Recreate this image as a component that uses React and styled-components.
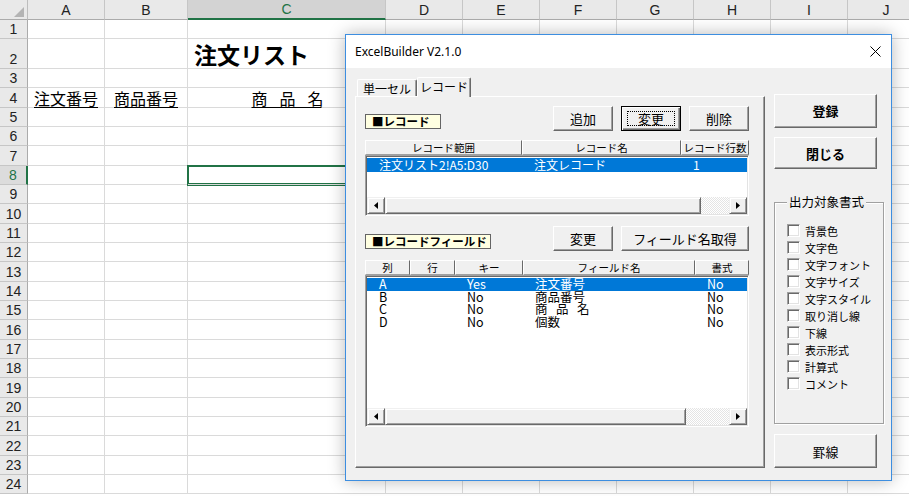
import React from "react";
import styled, { createGlobalStyle, css } from "styled-components";

const GlobalStyle = createGlobalStyle`
  html, body {
    margin: 0;
    padding: 0;
    background: #fff;
    overflow: hidden;
  }
  body {
    font-family: "Noto Sans CJK JP", "Liberation Sans", sans-serif;
    color: #000;
  }
`;

const COLS = ["A", "B", "C", "D", "E", "F", "G", "H", "I", "J"];
const ROWS = Array.from({ length: 24 }, (_, i) => i + 1);

/* ---------- spreadsheet ---------- */

const Sheet = styled.div`
  display: grid;
  grid-template-columns: 28px 77px 83px 198px repeat(7, 77px);
  grid-template-rows: 20px 19px 30px repeat(22, 19.33px);
  width: 925px;
  font-family: "Liberation Sans", "Noto Sans CJK JP", sans-serif;
`;

const Corner = styled.div`
  box-sizing: border-box;
  background: #e9e9e9;
  border-right: 1px solid #bdbdbd;
  border-bottom: 1px solid #ababab;
  display: flex;
  align-items: flex-end;
  justify-content: flex-end;
  padding: 0 3px 2px 0;
`;

const ColHead = styled.div`
  box-sizing: border-box;
  background: #e9e9e9;
  border-right: 1px solid #c6c6c6;
  border-bottom: 1px solid #ababab;
  display: flex;
  align-items: center;
  justify-content: center;
  font-size: 14px;
  color: #222;
  ${(p) =>
    p.$selected &&
    css`
      background: #d3d3d3;
      color: #217346;
      border-bottom: 2px solid #217346;
    `}
`;

const RowHead = styled.div`
  box-sizing: border-box;
  background: #e9e9e9;
  border-right: 1px solid #ababab;
  border-bottom: 1px solid #c6c6c6;
  display: flex;
  align-items: flex-end;
  justify-content: center;
  font-size: 14px;
  line-height: 17px;
  color: #222;
  ${(p) =>
    p.$selected &&
    css`
      background: #dcdcdc;
      color: #217346;
      border-right: 2px solid #217346;
    `}
`;

const Cell = styled.div`
  box-sizing: border-box;
  border-right: 1px solid #dadada;
  border-bottom: 1px solid #dadada;
  display: flex;
  align-items: flex-end;
  justify-content: ${(p) => p.$align || "flex-start"};
  white-space: nowrap;
  font-family: "Noto Sans CJK JP", sans-serif;
  ${(p) =>
    p.$active &&
    css`
      position: relative;
      z-index: 1;
      box-shadow: 0 0 0 1px #217346, inset 0 0 0 1px #217346;
    `}
`;

const SheetTitle = styled.span`
  font-size: 23px;
  font-weight: 700;
  line-height: 28px;
  padding-left: 6px;
`;

const ColumnLabel = styled.span`
  font-size: 16px;
  line-height: 18px;
  text-decoration: underline;
  text-underline-offset: 2px;
  letter-spacing: ${(p) => (p.$tight ? "-2px" : "0")};
`;

const sheetContent = {
  C2: <SheetTitle>注文リスト</SheetTitle>,
  A4: <ColumnLabel>注文番号</ColumnLabel>,
  B4: <ColumnLabel>商品番号</ColumnLabel>,
  C4: <ColumnLabel $tight>商　品　名</ColumnLabel>,
};

/* ---------- dialog ---------- */

const Dialog = styled.div`
  position: absolute;
  z-index: 10;
  left: 345px;
  top: 34px;
  width: 547px;
  height: 447px;
  box-sizing: border-box;
  border: 1px solid #3d8ee0;
  background: #f0f0f0;
  box-shadow: 0 0 16px rgba(0, 0, 0, 0.28);
  display: flex;
  flex-direction: column;
`;

const TitleBar = styled.div`
  height: 33px;
  flex: 0 0 33px;
  background: #fff;
  display: flex;
  align-items: center;
  justify-content: space-between;
  padding: 0 10px 0 9px;
  font-family: "Noto Sans", sans-serif;
  font-size: 12px;
`;

const DialogBody = styled.div`
  flex: 1;
  display: flex;
  gap: 9px;
  padding: 9px 7px 12px 9px;
  min-height: 0;
`;

const TabArea = styled.div`
  width: 410px;
  display: flex;
  flex-direction: column;
`;

const TabStrip = styled.div`
  height: 19px;
  display: flex;
  align-items: flex-end;
  padding-left: 2px;
`;

const Tab = styled.div`
  box-sizing: border-box;
  width: ${(p) => p.$w}px;
  height: ${(p) => (p.$active ? 20 : 17)}px;
  margin-bottom: ${(p) => (p.$active ? -1 : 0)}px;
  position: relative;
  z-index: ${(p) => (p.$active ? 2 : 0)};
  background: #f0f0f0;
  border-top: 1px solid #fff;
  border-left: 1px solid #fff;
  border-right: 1px solid #696969;
  border-radius: 2px 2px 0 0;
  box-shadow: inset -1px 0 #a0a0a0;
  display: flex;
  align-items: ${(p) => (p.$active ? "flex-start" : "center")};
  padding-top: ${(p) => (p.$active ? 1 : 0)}px;
  justify-content: center;
  font-size: 12px;
  line-height: 15px;
`;

const TabPanel = styled.div`
  flex: 1;
  box-sizing: border-box;
  border-top: 1px solid #fff;
  border-left: 1px solid #fff;
  border-right: 1px solid #696969;
  border-bottom: 1px solid #696969;
  box-shadow: inset -1px -1px #a0a0a0;
  padding: 9px 15px 0 9px;
  display: flex;
  flex-direction: column;
`;

const SectionBar = styled.div`
  height: 25px;
  display: flex;
  align-items: flex-end;
  justify-content: space-between;
  margin-top: ${(p) => p.$gap || 0}px;
`;

const TagLabel = styled.div`
  box-sizing: border-box;
  width: ${(p) => p.$w}px;
  height: 15px;
  margin-bottom: 2px;
  background: #ffffe1;
  border: 1px solid #646464;
  padding-left: 6px;
  font-size: 11.5px;
  font-weight: 700;
  line-height: 13px;
  white-space: nowrap;
`;

const ButtonRow = styled.div`
  display: flex;
  gap: 8px;
  align-self: stretch;
`;

const Button = styled.button`
  box-sizing: border-box;
  width: ${(p) => p.$w}px;
  height: ${(p) => p.$h}px;
  padding: 0;
  margin: 0;
  background: #f0f0f0;
  font-family: "Noto Sans CJK JP", sans-serif;
  font-size: 13px;
  font-weight: ${(p) => (p.$bold ? 700 : 400)};
  color: #000;
  border-style: solid;
  border-width: 1px;
  border-color: #fff #696969 #696969 #fff;
  box-shadow: inset -1px -1px #a0a0a0;
  display: flex;
  align-items: center;
  justify-content: center;
  ${(p) =>
    p.$focused &&
    css`
      border-color: #000;
      box-shadow: inset 1px 1px #fff, inset -1px -1px #696969,
        inset -2px -2px #a0a0a0;
    `}
`;

const FocusRing = styled.span`
  box-sizing: border-box;
  width: calc(100% - 10px);
  height: calc(100% - 8px);
  border: 1px dotted #000;
  display: flex;
  align-items: center;
  justify-content: center;
`;

const ListHeader = styled.div`
  display: grid;
  grid-template-columns: ${(p) => p.$cols};
  height: 15px;
  margin-top: 9px;
`;

const HeaderCell = styled.div`
  box-sizing: border-box;
  background: #f0f0f0;
  border-style: solid;
  border-width: 1px;
  border-color: #fff #696969 #a0a0a0 #fff;
  font-size: 10.5px;
  line-height: 13px;
  text-align: center;
  white-space: nowrap;
  overflow: hidden;
`;

const ListBox = styled.div`
  box-sizing: border-box;
  height: ${(p) => p.$h}px;
  background: #fff;
  border-style: solid;
  border-width: 1px;
  border-color: #a0a0a0 #fff #fff #a0a0a0;
  box-shadow: inset 1px 1px #696969, inset -1px -1px #e3e3e3;
  padding: 1px;
  display: flex;
  flex-direction: column;
`;

const Rows = styled.div`
  flex: 1;
  padding-top: 1px;
`;

const ListRow = styled.div`
  display: grid;
  grid-template-columns: ${(p) => p.$cols};
  height: ${(p) => p.$h}px;
  line-height: ${(p) => p.$h}px;
  font-size: ${(p) => p.$size}px;
  white-space: nowrap;
  background: ${(p) => (p.$selected ? "#0078d7" : "transparent")};
  color: ${(p) => (p.$selected ? "#fff" : "#000")};
`;

const RowCell = styled.span`
  padding-left: 12px;
  overflow: visible;
  letter-spacing: ${(p) => (p.$tight ? "-2px" : "0")};
`;

const ScrollBar = styled.div`
  height: 17px;
  display: flex;
  flex: 0 0 17px;
`;

const raised = css`
  box-sizing: border-box;
  background: #f0f0f0;
  border-style: solid;
  border-width: 1px;
  border-color: #f0f0f0 #696969 #696969 #f0f0f0;
  box-shadow: inset 1px 1px #fff, inset -1px -1px #a0a0a0;
`;

const ArrowButton = styled.div`
  ${raised}
  width: 18px;
  display: flex;
  align-items: center;
  justify-content: center;
`;

const Thumb = styled.div`
  ${raised}
  flex: 0 0 ${(p) => p.$w}px;
`;

const Track = styled.div`
  flex: 1;
  background: repeating-conic-gradient(#fff 0 25%, #e4e4e4 0 50%) 0 0 / 2px
    2px;
`;

const SideColumn = styled.div`
  width: 110px;
  display: flex;
  flex-direction: column;
  padding-top: 17px;
`;

const GroupBox = styled.fieldset`
  box-sizing: border-box;
  margin: 26px 0 0 0;
  height: 231px;
  padding: 13px 0 0 12px;
  border: 1px solid #a0a0a0;
  box-shadow: inset 1px 1px #fff, 1px 1px #fff;
`;

const Legend = styled.legend`
  font-size: 12.5px;
  line-height: 14px;
  padding: 0 2px;
  background: #f0f0f0;
  position: relative;
  z-index: 1;
`;

const CheckRow = styled.label`
  height: 17px;
  display: flex;
  align-items: center;
  gap: 5px;
  font-size: 11px;
  white-space: nowrap;
`;

const CheckBox = styled.span`
  box-sizing: border-box;
  width: 13px;
  height: 13px;
  background: #fff;
  border-style: solid;
  border-width: 1px;
  border-color: #a0a0a0 #fff #fff #a0a0a0;
  box-shadow: inset 1px 1px #696969, inset -1px -1px #e3e3e3;
`;

/* ---------- data ---------- */

const RECORD_COLS = "157px 159px 68px";
const RECORD_ROW_COLS = "155px 159px 66px";
const FIELD_COLS = "45px 45px 68px 172px 54px";
const FIELD_ROW_COLS = "43px 45px 68px 172px 52px";

const fields = [
  ["A", "", "Yes", "注文番号", "No"],
  ["B", "", "No", "商品番号", "No"],
  ["C", "", "No", "商　品　名", "No"],
  ["D", "", "No", "個数", "No"],
];

const formats = [
  "背景色",
  "文字色",
  "文字フォント",
  "文字サイズ",
  "文字スタイル",
  "取り消し線",
  "下線",
  "表示形式",
  "計算式",
  "コメント",
];

function Arrow({ dir }) {
  return (
    <svg width="4" height="7" viewBox="0 0 4 7">
      <polygon
        points={dir === "left" ? "4,0 4,7 0,3.5" : "0,0 0,7 4,3.5"}
        fill="#000"
      />
    </svg>
  );
}

function HScroll({ thumb }) {
  return (
    <ScrollBar>
      <ArrowButton>
        <Arrow dir="left" />
      </ArrowButton>
      <Thumb $w={thumb} />
      <Track />
      <ArrowButton>
        <Arrow dir="right" />
      </ArrowButton>
    </ScrollBar>
  );
}

function Spreadsheet() {
  return (
    <Sheet>
      <Corner>
        <svg width="10" height="10" viewBox="0 0 10 10">
          <polygon points="0,10 10,10 10,0" fill="#b4b4b4" />
        </svg>
      </Corner>
      {COLS.map((c) => (
        <ColHead key={c} $selected={c === "C"}>
          {c}
        </ColHead>
      ))}
      {ROWS.map((r) => (
        <React.Fragment key={r}>
          <RowHead $selected={r === 8}>{r}</RowHead>
          {COLS.map((c) => (
            <Cell
              key={c}
              $active={r === 8 && c === "C"}
              $align={r === 4 ? "center" : "flex-start"}
            >
              {sheetContent[`${c}${r}`]}
            </Cell>
          ))}
        </React.Fragment>
      ))}
    </Sheet>
  );
}

function BuilderDialog() {
  return (
    <Dialog>
      <TitleBar>
        <span>ExcelBuilder V2.1.0</span>
        <svg width="11" height="11" viewBox="0 0 11 11">
          <path d="M0.5 0.5 L10.5 10.5 M10.5 0.5 L0.5 10.5" stroke="#000" strokeWidth="1" />
        </svg>
      </TitleBar>
      <DialogBody>
        <TabArea>
          <TabStrip>
            <Tab $w={60}>単一セル</Tab>
            <Tab $w={54} $active>
              レコード
            </Tab>
          </TabStrip>
          <TabPanel>
            <SectionBar>
              <TagLabel $w={76}>■レコード</TagLabel>
              <ButtonRow>
                <Button $w={60} $h={25}>追加</Button>
                <Button $w={60} $h={25} $focused>
                  <FocusRing>変更</FocusRing>
                </Button>
                <Button $w={60} $h={25}>削除</Button>
              </ButtonRow>
            </SectionBar>
            <ListHeader $cols={RECORD_COLS}>
              <HeaderCell>レコード範囲</HeaderCell>
              <HeaderCell>レコード名</HeaderCell>
              <HeaderCell>レコード行数</HeaderCell>
            </ListHeader>
            <ListBox $h={61}>
              <Rows>
                <ListRow $cols={RECORD_ROW_COLS} $h={14} $size={12} $selected>
                  <RowCell>注文リスト2!A5:D30</RowCell>
                  <RowCell>注文レコード</RowCell>
                  <RowCell>1</RowCell>
                </ListRow>
              </Rows>
              <HScroll thumb={316} />
            </ListBox>

            <SectionBar $gap={10}>
              <TagLabel $w={126}>■レコードフィールド</TagLabel>
              <ButtonRow>
                <Button $w={60} $h={25}>変更</Button>
                <Button $w={128} $h={25}>フィールド名取得</Button>
              </ButtonRow>
            </SectionBar>
            <ListHeader $cols={FIELD_COLS}>
              <HeaderCell>列</HeaderCell>
              <HeaderCell>行</HeaderCell>
              <HeaderCell>キー</HeaderCell>
              <HeaderCell>フィールド名</HeaderCell>
              <HeaderCell>書式</HeaderCell>
            </ListHeader>
            <ListBox $h={152}>
              <Rows>
                {fields.map((f, i) => (
                  <ListRow
                    key={f[0]}
                    $cols={FIELD_ROW_COLS}
                    $h={12.5}
                    $size={12.5}
                    $selected={i === 0}
                  >
                    {f.map((v, j) => (
                      <RowCell key={j} $tight={v.includes("　")}>
                        {v}
                      </RowCell>
                    ))}
                  </ListRow>
                ))}
              </Rows>
              <HScroll thumb={301} />
            </ListBox>
          </TabPanel>
        </TabArea>

        <SideColumn>
          <Button $w={103} $h={34} $bold>登録</Button>
          <Button $w={103} $h={33} $bold style={{ marginTop: 9 }}>
            閉じる
          </Button>
          <GroupBox>
            <Legend>出力対象書式</Legend>
            {formats.map((f) => (
              <CheckRow key={f}>
                <CheckBox />
                {f}
              </CheckRow>
            ))}
          </GroupBox>
          <Button $w={103} $h={34} style={{ marginTop: 10 }}>
            罫線
          </Button>
        </SideColumn>
      </DialogBody>
    </Dialog>
  );
}

export default function App() {
  return (
    <>
      <GlobalStyle />
      <Spreadsheet />
      <BuilderDialog />
    </>
  );
}
